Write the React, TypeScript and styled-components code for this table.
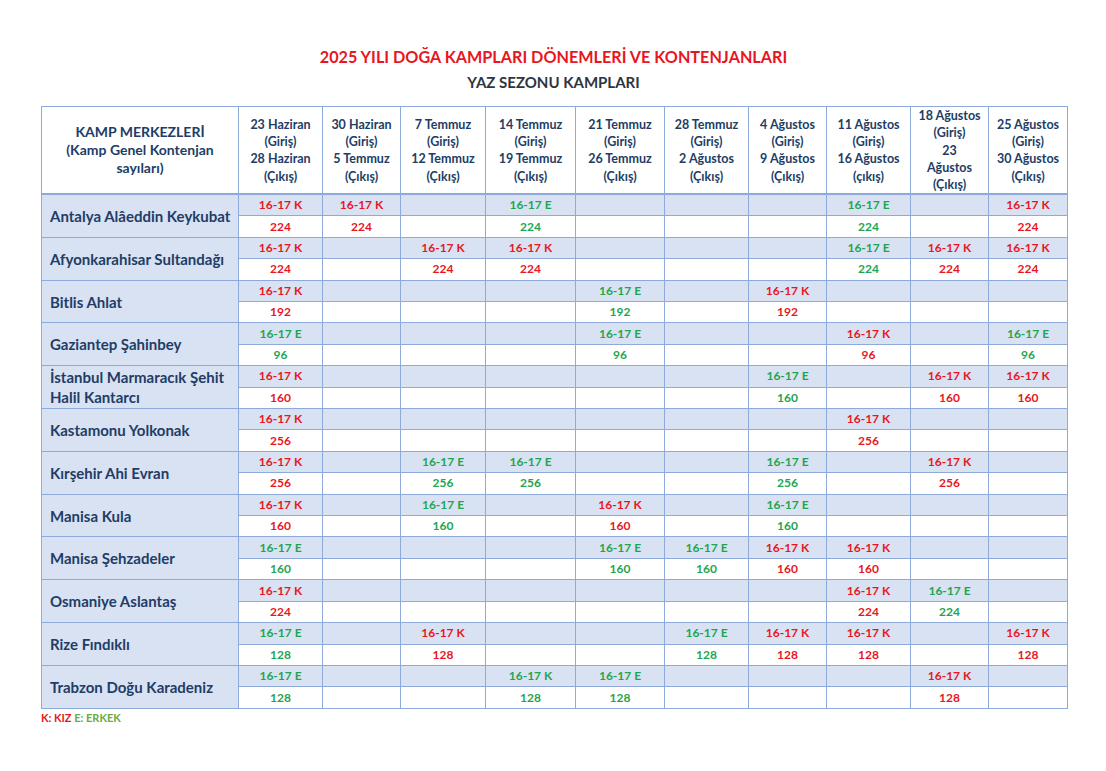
import React from "react";
import styled, { createGlobalStyle } from "styled-components";

const Global = createGlobalStyle`
  html, body { margin: 0; padding: 0; background: #fff; }
  body { font-family: Lato, "Open Sans", "Liberation Sans", sans-serif; }
`;

const RED = "#e8161e";
const GREEN = "#1fa54f";
const BORDER = "#8eaadb";
const LIGHT = "#d9e2f3";
const NAVY = "#213d66";

const Page = styled.div`
  width: 1106px;
  height: 771px;
  box-sizing: border-box;
  padding: 46px 0 0 41px;
`;

const Title = styled.h1`
  margin: 0;
  width: 1025px;
  text-align: center;
  font-size: 16.2px;
  line-height: 22px;
  font-weight: 700;
  color: ${RED};
`;

const Subtitle = styled.h2`
  margin: 4px 0 0;
  width: 1025px;
  text-align: center;
  font-size: 15px;
  line-height: 20px;
  font-weight: 700;
  color: #2d3540;
`;

const Table = styled.table`
  margin-top: 14px;
  width: 1026px;
  border-collapse: collapse;
  table-layout: fixed;
  border: 1px solid ${BORDER};
`;

const HeadCell = styled.th`
  border: 1px solid ${BORDER};
  border-bottom: 2px solid ${BORDER};
  height: 86px;
  padding: 0 2px;
  text-align: center;
  vertical-align: middle;
  font-size: 12.5px;
  line-height: 17.3px;
  font-weight: 700;
  color: ${NAVY};
`;

const NameHead = styled(HeadCell)`
  font-size: 14px;
  line-height: 18px;
`;

const SubRow = styled.tr<{ $light?: boolean }>`
  height: 21.42px;
  background: ${(p) => (p.$light ? LIGHT : "#fff")};
`;

const NameCell = styled.td`
  border: 1px solid ${BORDER};
  background: ${LIGHT};
  padding: 0 2px 0 8px;
  white-space: nowrap;
  overflow: hidden;
  font-size: 15px;
  line-height: 20px;
  font-weight: 700;
  color: ${NAVY};
  vertical-align: middle;
`;

const DataCell = styled.td<{ $color?: string }>`
  border: 1px solid ${BORDER};
  padding: 0;
  text-align: center;
  vertical-align: middle;
  font-size: 12px;
  line-height: 14px;
  font-weight: 700;
  color: ${(p) => p.$color || RED};
`;

const Legend = styled.div`
  margin-top: 2px;
  font-size: 11px;
  line-height: 14px;
  font-weight: 700;
`;

const LegendK = styled.span`
  color: ${RED};
`;
const LegendE = styled.span`
  color: #6aaa45;
`;

const widths = [197, 84, 78, 85, 90, 89, 84, 78, 84, 78, 79];

const headers: string[][] = [
  ["23 Haziran", "(Giriş)", "28 Haziran", "(Çıkış)"],
  ["30 Haziran", "(Giriş)", "5 Temmuz", "(Çıkış)"],
  ["7 Temmuz", "(Giriş)", "12 Temmuz", "(Çıkış)"],
  ["14 Temmuz", "(Giriş)", "19 Temmuz", "(Çıkış)"],
  ["21 Temmuz", "(Giriş)", "26 Temmuz", "(Çıkış)"],
  ["28 Temmuz", "(Giriş)", "2 Ağustos", "(Çıkış)"],
  ["4 Ağustos", "(Giriş)", "9 Ağustos", "(Çıkış)"],
  ["11 Ağustos", "(Giriş)", "16 Ağustos", "(çıkış)"],
  ["18 Ağustos", "(Giriş)", "23", "Ağustos", "(Çıkış)"],
  ["25 Ağustos", "(Giriş)", "30 Ağustos", "(Çıkış)"],
];

type Entry = { label: string; color: string; n: number };
type Camp = { name: string[]; cells: Record<number, Entry> };

const K = (n: number): Entry => ({ label: "16-17 K", color: RED, n });
const E = (n: number): Entry => ({ label: "16-17 E", color: GREEN, n });
const KG = (n: number): Entry => ({ label: "16-17 K", color: GREEN, n });

const camps: Camp[] = [
  { name: ["Antalya Alâeddin Keykubat"], cells: { 1: K(224), 2: K(224), 4: E(224), 8: E(224), 10: K(224) } },
  { name: ["Afyonkarahisar Sultandağı"], cells: { 1: K(224), 3: K(224), 4: K(224), 8: E(224), 9: K(224), 10: K(224) } },
  { name: ["Bitlis Ahlat"], cells: { 1: K(192), 5: E(192), 7: K(192) } },
  { name: ["Gaziantep Şahinbey"], cells: { 1: E(96), 5: E(96), 8: K(96), 10: E(96) } },
  { name: ["İstanbul Marmaracık Şehit", "Halil Kantarcı"], cells: { 1: K(160), 7: E(160), 9: K(160), 10: K(160) } },
  { name: ["Kastamonu Yolkonak"], cells: { 1: K(256), 8: K(256) } },
  { name: ["Kırşehir Ahi Evran"], cells: { 1: K(256), 3: E(256), 4: E(256), 7: E(256), 9: K(256) } },
  { name: ["Manisa Kula"], cells: { 1: K(160), 3: E(160), 5: K(160), 7: E(160) } },
  { name: ["Manisa Şehzadeler"], cells: { 1: E(160), 5: E(160), 6: E(160), 7: K(160), 8: K(160) } },
  { name: ["Osmaniye Aslantaş"], cells: { 1: K(224), 8: K(224), 9: E(224) } },
  { name: ["Rize Fındıklı"], cells: { 1: E(128), 3: K(128), 6: E(128), 7: K(128), 8: K(128), 10: K(128) } },
  { name: ["Trabzon Doğu Karadeniz"], cells: { 1: E(128), 4: KG(128), 5: E(128), 9: K(128) } },
];

const cols = [1, 2, 3, 4, 5, 6, 7, 8, 9, 10];

export default function App() {
  return (
    <Page>
      <Global />
      <Title>2025 YILI DOĞA KAMPLARI DÖNEMLERİ VE KONTENJANLARI</Title>
      <Subtitle>YAZ SEZONU KAMPLARI</Subtitle>
      <Table>
        <colgroup>
          {widths.map((w, i) => (
            <col key={i} style={{ width: w }} />
          ))}
        </colgroup>
        <thead>
          <tr>
            <NameHead>
              KAMP MERKEZLERİ
              <br />
              (Kamp Genel Kontenjan
              <br />
              sayıları)
            </NameHead>
            {headers.map((lines, i) => (
              <HeadCell key={i}>
                {lines.map((l, j) => (
                  <React.Fragment key={j}>
                    {j > 0 && <br />}
                    {l}
                  </React.Fragment>
                ))}
              </HeadCell>
            ))}
          </tr>
        </thead>
        <tbody>
          {camps.map((c, i) => (
            <React.Fragment key={i}>
              <SubRow $light>
                <NameCell rowSpan={2}>
                  {c.name.map((l, j) => (
                    <React.Fragment key={j}>
                      {j > 0 && <br />}
                      {l}
                    </React.Fragment>
                  ))}
                </NameCell>
                {cols.map((col) => (
                  <DataCell key={col} $color={c.cells[col]?.color}>
                    {c.cells[col]?.label}
                  </DataCell>
                ))}
              </SubRow>
              <SubRow>
                {cols.map((col) => (
                  <DataCell key={col} $color={c.cells[col]?.color}>
                    {c.cells[col]?.n}
                  </DataCell>
                ))}
              </SubRow>
            </React.Fragment>
          ))}
        </tbody>
      </Table>
      <Legend>
        <LegendK>K: KIZ</LegendK> <LegendE>E: ERKEK</LegendE>
      </Legend>
    </Page>
  );
}
